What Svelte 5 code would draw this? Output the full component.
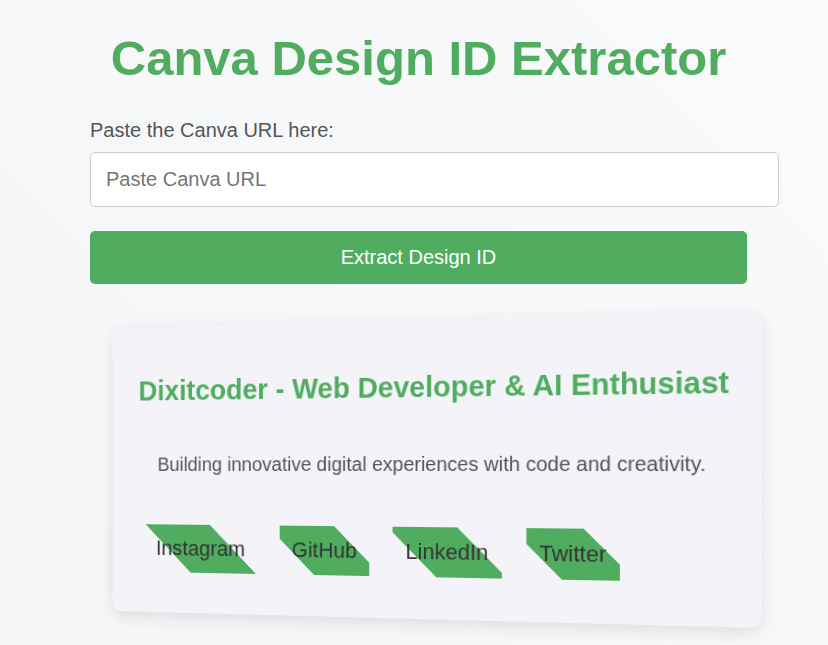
<script>
  let url = $state('');
  const links = ['Instagram', 'GitHub', 'LinkedIn', 'Twitter'];
</script>

<main>
  <h1>Canva Design ID Extractor</h1>
  <form onsubmit={(e) => e.preventDefault()}>
    <label for="url">Paste the Canva URL here:</label>
    <input id="url" type="text" placeholder="Paste Canva URL" bind:value={url} />
    <button type="submit">Extract Design ID</button>
  </form>
  <section class="card">
    <h2>Dixitcoder - Web Developer &amp; AI Enthusiast</h2>
    <p>Building innovative digital experiences with code and creativity.</p>
    <nav>
      {#each links as name}
        <a href="#{name.toLowerCase()}">{name}</a>
      {/each}
    </nav>
  </section>
</main>

<style>
  :global(body) {
    margin: 0;
    background: #f6f7f9;
  }
  main {
    box-sizing: border-box;
    min-height: 100vh;
    padding: 28px 81px 26px 90px;
    background: linear-gradient(45deg, #f4f5f7, #f8fafc);
    font-family: 'Liberation Sans', Arial, sans-serif;
    font-size: 20px;
    color: #555;
    overflow: hidden;
  }
  h1 {
    margin: 0 0 30px;
    font-size: 49px;
    line-height: 60px;
    text-align: center;
    white-space: nowrap;
    color: #50ad60;
  }
  form {
    display: flex;
    flex-direction: column;
  }
  label {
    line-height: 24px;
    margin-bottom: 10px;
  }
  input {
    box-sizing: content-box;
    width: 100%;
    height: 23px;
    padding: 15px;
    border: 1px solid #ccc;
    border-radius: 5px;
    background: #fff;
    font: inherit;
    color: #333;
  }
  input::placeholder {
    color: #757575;
  }
  button {
    height: 53px;
    margin-top: 24px;
    border: 0;
    border-radius: 5px;
    background: #50ad60;
    color: #fff;
    font: inherit;
    cursor: pointer;
  }
  .card {
    margin-top: 36px;
    padding: 24px 24px 42px;
    border-radius: 10px;
    background: #f3f3f8;
    box-shadow: 0 5px 15px rgba(0, 0, 0, 0.1);
    transform: perspective(1000px) rotateY(-10deg);
    text-align: center;
  }
  h2 {
    margin: 25px 0 47px;
    font-size: 29px;
    line-height: 36px;
    white-space: nowrap;
    color: #50ad60;
  }
  p {
    margin: 0 0 51px;
    line-height: 24px;
    white-space: nowrap;
  }
  nav {
    display: flex;
    gap: 24px;
    padding: 0 12px;
  }
  a {
    padding: 0 13px;
    font-size: 22px;
    line-height: 50px;
    color: #333;
    text-decoration: none;
    background: linear-gradient(
      45deg,
      transparent calc(50% - 25px),
      #50ad60 calc(50% - 25px),
      #50ad60 calc(50% + 25px),
      transparent calc(50% + 25px)
    );
  }
</style>
